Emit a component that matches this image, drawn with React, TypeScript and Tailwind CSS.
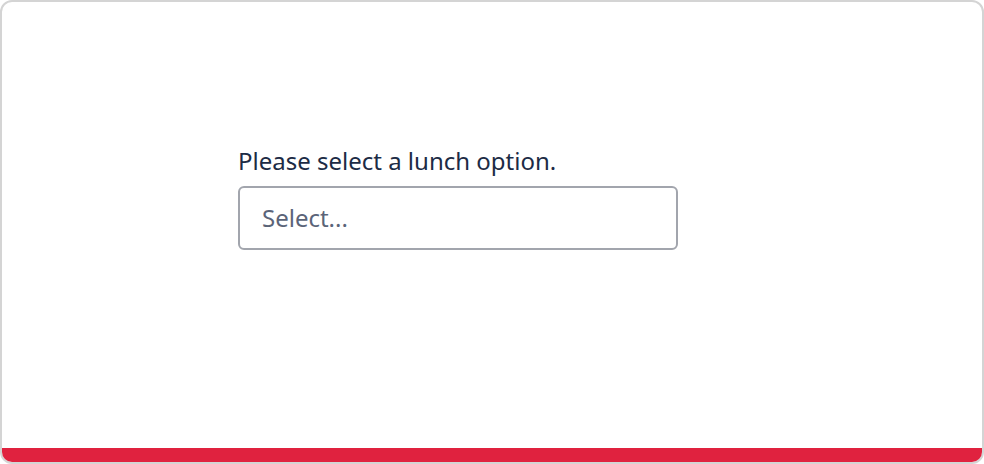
export default function App() {
  return (
    <div className="w-[984px] h-[464px] bg-white">
      <div className="flex h-full flex-col overflow-hidden rounded-[12px] border-2 border-[#d4d4d4] bg-white font-['Noto_Sans',sans-serif]">
        <div className="flex flex-1 flex-col pl-[236px] pt-[143px]">
          <label className="text-[24px] leading-[32px] text-[#1c2b45]">Please select a lunch option.</label>
          <button className="mt-[9px] flex h-[64px] w-[440px] items-center rounded-[6px] border-2 border-[#a2a5ad] bg-white pl-[22px] text-left text-[24px] text-[#5b6478]">
            Select...
          </button>
        </div>
        <div className="h-[14px] bg-[#e0223f]" />
      </div>
    </div>
  );
}
